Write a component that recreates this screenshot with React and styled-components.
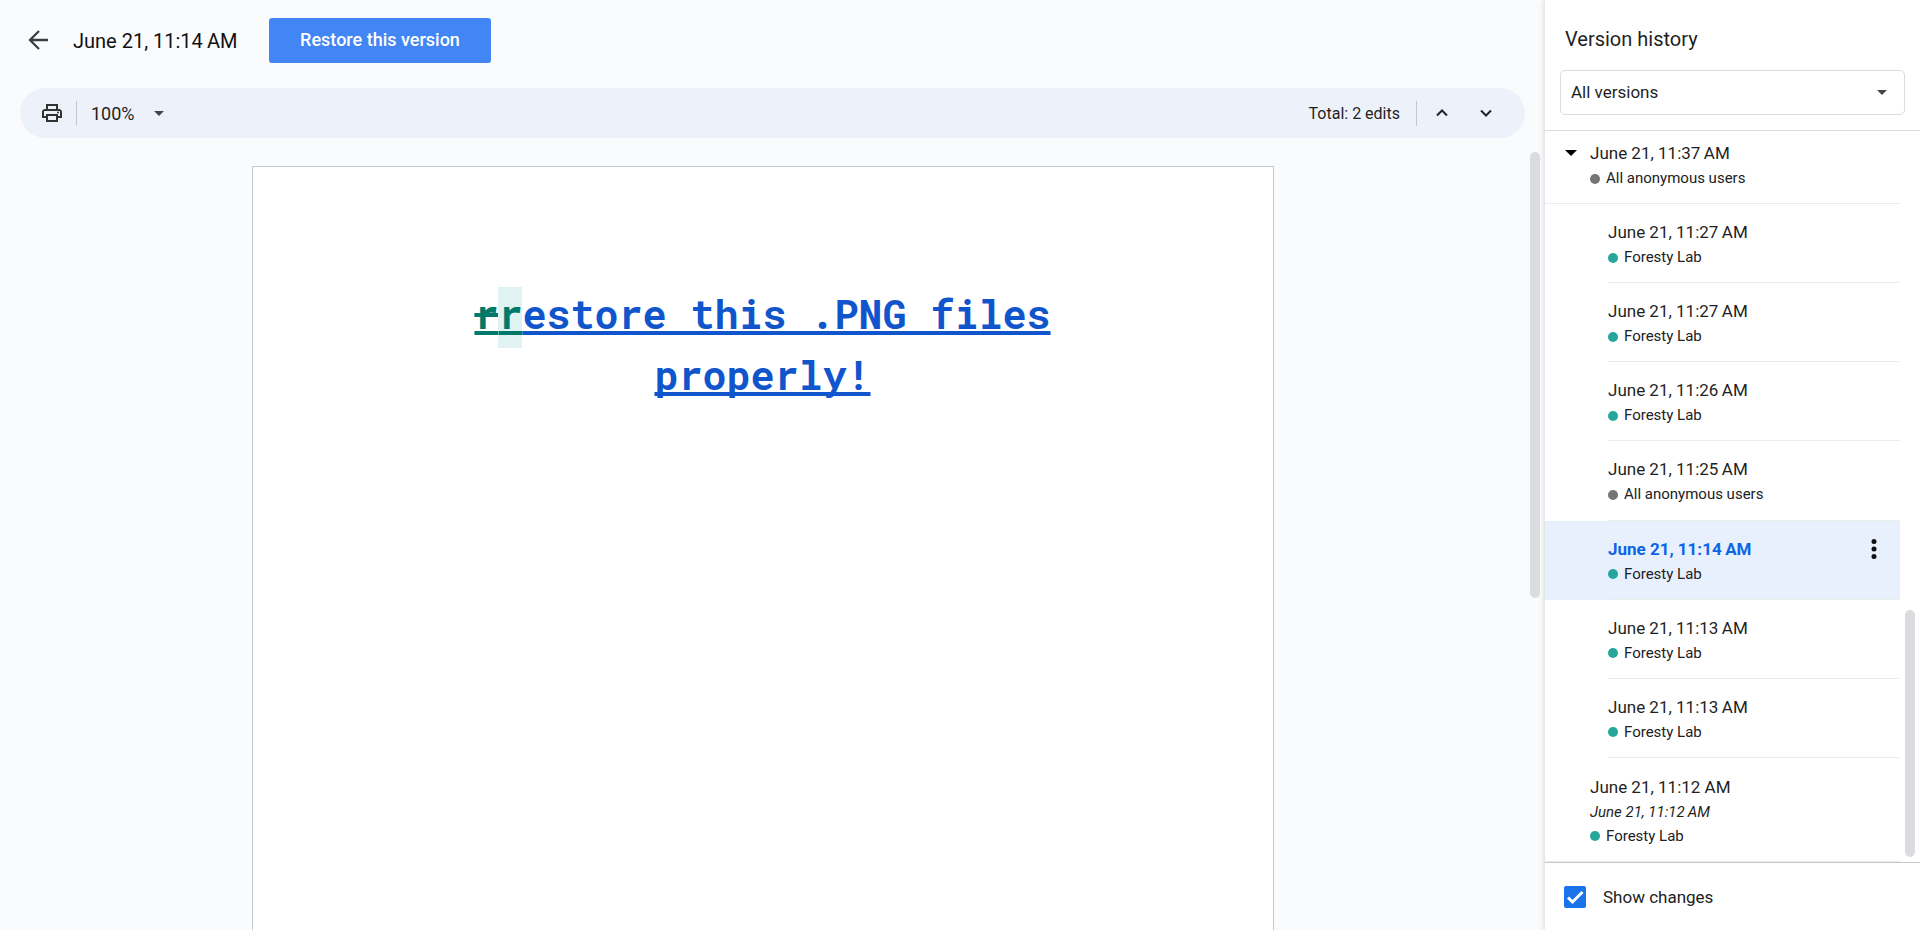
import React, { useState } from "react";
import styled, { createGlobalStyle, css } from "styled-components";

const GlobalStyle = createGlobalStyle`
  *, *::before, *::after { box-sizing: border-box; }
  body {
    margin: 0;
    background: #fafbfd;
    color: #1f1f1f;
    font-family: Roboto, "Liberation Sans", sans-serif;
  }
  button, select, input { font: inherit; color: inherit; margin: 0; }
`;

const Shell = styled.div`
  display: flex;
  min-height: 100vh;
`;

const Main = styled.main`
  flex: 1;
  min-width: 0;
  display: flex;
  flex-direction: column;
`;

const TopBar = styled.header`
  display: flex;
  align-items: center;
  height: 88px;
  padding: 0 20px 8px;
`;

const IconButton = styled.button`
  display: inline-flex;
  align-items: center;
  justify-content: center;
  flex: none;
  width: ${(p) => p.$size || 36}px;
  height: ${(p) => p.$size || 36}px;
  padding: 0;
  border: 0;
  border-radius: 50%;
  background: transparent;
  cursor: pointer;
  svg { display: block; }
`;

const Title = styled.h1`
  margin: 0 0 0 17px;
  padding-top: 2px;
  width: 180px;
  font-size: 20px;
  line-height: 28px;
  font-weight: 400;
  color: #111;
  white-space: nowrap;
`;

const RestoreButton = styled.button`
  height: 45px;
  width: 222px;
  margin-left: 16px;
  padding: 0 0 2px;
  border: 0;
  border-radius: 3px;
  background: #4285f4;
  color: #fff;
  font-size: 18px;
  font-weight: 500;
  cursor: pointer;
`;

const Toolbar = styled.div`
  display: flex;
  align-items: center;
  height: 50px;
  margin: 0 20px;
  padding: 0 21px 0 20px;
  border-radius: 25px;
  background: #edf2fa;
`;

const Divider = styled.span`
  width: 1px;
  height: 25px;
  background: #c4c7c5;
`;

const ToolDivider = styled(Divider)`
  margin-left: 12px;
`;

const SelectWrap = styled.div`
  display: grid;
  align-items: center;
  > * { grid-area: 1 / 1; }
  > svg { justify-self: end; pointer-events: none; }
`;

const ZoomWrap = styled(SelectWrap)`
  width: 73px;
  margin-left: 14px;
`;

const PlainSelect = styled.select`
  appearance: none;
  width: 100%;
  padding: 0;
  border: 0;
  background: transparent;
  font-size: 18px;
  line-height: 24px;
`;

const ZoomSelect = styled(PlainSelect)`
  padding-top: 2px;
`;

const EditCount = styled.span`
  margin-left: auto;
  margin-right: 16px;
  padding-top: 2px;
  font-size: 16px;
  line-height: 24px;
`;

const StepButtons = styled.div`
  display: flex;
  gap: 8px;
  margin-left: 7px;
`;

const Canvas = styled.div`
  flex: 1;
  display: flex;
  padding: 14px 5px 0 0;
`;

const Sheet = styled.article`
  width: 1022px;
  max-width: 100%;
  margin: 14px auto 0;
  padding: 116px 120px 120px;
  border: 1px solid #c7c9cc;
  border-bottom: 0;
  background: #fff;
`;

const Heading = styled.h2`
  margin: 0;
  text-align: center;
  font-family: "Roboto Mono", "DejaVu Sans Mono", "Liberation Mono", monospace;
  font-size: 40px;
  line-height: 61px;
  font-weight: 700;
`;

const decoration = css`
  text-decoration-thickness: 4px;
  text-underline-offset: 2px;
  text-decoration-skip-ink: none;
`;

const DocLink = styled.a`
  color: #1155cc;
  text-decoration-line: underline;
  ${decoration}
`;

const Removed = styled.del`
  display: inline-block;
  color: #00796b;
  text-decoration-line: underline line-through;
  ${decoration}
`;

const Added = styled.ins`
  display: inline-block;
  line-height: 53px;
  padding-bottom: 8px;
  margin-bottom: -4px;
  background: #e0f2f1;
  color: #00796b;
  text-decoration-line: underline;
  ${decoration}
`;

const Thumb = styled.span`
  flex: none;
  width: 10px;
  border-radius: 5px;
  background: #dadce0;
  height: ${(p) => p.$length}px;
  align-self: ${(p) => (p.$atEnd ? "flex-end" : "flex-start")};
  margin: 0 0 ${(p) => (p.$atEnd ? 5 : 0)}px 5px;
`;

const Sidebar = styled.aside`
  flex: none;
  width: 375px;
  display: flex;
  flex-direction: column;
  background: #fff;
  box-shadow: 0 0 6px rgba(60, 64, 67, 0.25);
`;

const SideHeader = styled.div`
  height: 131px;
  padding: 25px 15px 0;
  border-bottom: 1px solid #dadce0;
`;

const SideTitle = styled.h2`
  margin: 0 0 17px 5px;
  font-size: 20px;
  line-height: 28px;
  font-weight: 400;
`;

const FilterWrap = styled(SelectWrap)`
  > svg { margin-right: 18px; }
`;

const FilterSelect = styled(PlainSelect)`
  height: 45px;
  padding: 0 10px 2px;
  border: 1px solid #dadce0;
  border-radius: 5px;
  font-size: 17px;
`;

const ListArea = styled.div`
  flex: 1;
  display: flex;
  padding-right: 5px;
`;

const VersionList = styled.ul`
  flex: 1;
  display: flex;
  flex-direction: column;
  margin: 0;
  padding: 0;
  list-style: none;
`;

const rowKinds = {
  group: css`
    flex: 0 0 73px;
    padding: 9px 0 0 8px;
    background-position: 0 100%;
  `,
  child: css`
    flex: 1 0 79px;
    padding: 15px 0 0 63px;
    background-position: 63px 100%;
  `,
  last: css`
    flex: 0 0 104px;
    padding: 16px 0 0 45px;
    background-position: 0 100%;
  `,
};

const Row = styled.li`
  display: flex;
  align-items: flex-start;
  background-image: linear-gradient(#ebebeb, #ebebeb);
  background-size: 100% 1px;
  background-repeat: no-repeat;
  background-color: ${(p) => (p.$selected ? "#e8f0fe" : "transparent")};
  ${(p) => rowKinds[p.$kind]}
`;

const VersionButton = styled.button`
  flex: 1;
  padding: 0;
  border: 0;
  background: transparent;
  text-align: left;
  cursor: pointer;
`;

const When = styled.span`
  display: block;
  font-size: 17px;
  line-height: 26px;
  font-weight: ${(p) => (p.$selected ? 700 : 400)};
  color: ${(p) => (p.$selected ? "#0b65e5" : "#1f1f1f")};
`;

const Original = styled.em`
  display: block;
  font-size: 15px;
  line-height: 24px;
`;

const Author = styled.span`
  display: flex;
  align-items: center;
  gap: 6px;
  font-size: 15px;
  line-height: 25px;
  color: #202124;
  &::before {
    content: "";
    width: 10px;
    height: 10px;
    border-radius: 50%;
    background: ${(p) => p.$color};
  }
`;

const SideFooter = styled.div`
  height: 68px;
  padding-left: 19px;
  border-top: 1px solid #c7c9cc;
  display: flex;
  align-items: center;
`;

const CheckLabel = styled.label`
  display: flex;
  align-items: center;
  gap: 17px;
  font-size: 17px;
  line-height: 24px;
  color: #202124;
  cursor: pointer;
`;

const CheckBox = styled.span`
  display: grid;
  > * { grid-area: 1 / 1; }
  > svg { pointer-events: none; }
  > input {
    appearance: none;
    width: 22px;
    height: 22px;
    border: 2px solid #1a73e8;
    border-radius: 2px;
  }
  > input:checked { background: #1a73e8; }
`;

const BackIcon = () => (
  <svg width="24" height="24" viewBox="0 0 24 24" fill="none" stroke="#3c3f42" strokeWidth="2.300">
    <path d="M22 12H4M13 3l-9 9 9 9" />
  </svg>
);

const PrintIcon = () => (
  <svg width="24" height="24" viewBox="0 0 24 24" fill="#303330">
    <path d="M19 8h-1V3H6v5H5c-1.660 0-3 1.340-3 3v6h4v4h12v-4h4v-6c0-1.660-1.340-3-3-3zM8 5h8v3H8V5zm8 12v2H8v-4h8v2zm2-2v-2H6v2H4v-4c0-.550.450-1 1-1h14c.550 0 1 .450 1 1v4h-2z" />
    <circle cx="18" cy="11.500" r="1" />
  </svg>
);

const Caret = ({ width = 10, color = "#444746" }) => (
  <svg width={width} height={width / 2} viewBox="0 0 10 5" fill={color}>
    <path d="M0 0h10L5 5z" />
  </svg>
);

const Chevron = ({ up }) => (
  <svg width="12" height="8" viewBox="0 0 12 8" fill="none" stroke="#222" strokeWidth="2">
    <path d={up ? "M1 6.500l5-5 5 5" : "M1 1.500l5 5 5-5"} />
  </svg>
);

const Kebab = () => (
  <svg width="6" height="20" viewBox="0 0 6 20" fill="#111">
    <circle cx="3" cy="2.500" r="2.500" />
    <circle cx="3" cy="10" r="2.500" />
    <circle cx="3" cy="17.500" r="2.500" />
  </svg>
);

const GroupToggle = styled(IconButton)`
  height: 26px;
  margin-right: 1px;
`;

const RowMenu = styled(IconButton)`
  height: 26px;
  margin-right: 8px;
`;

const TEAL = "#26a69a";
const GREY = "#757575";

const versions = [
  { id: 1, kind: "group", when: "June 21, 11:37\u2009AM", author: "All anonymous users", color: GREY },
  { id: 2, kind: "child", when: "June 21, 11:27\u2009AM", author: "Foresty Lab", color: TEAL },
  { id: 3, kind: "child", when: "June 21, 11:27\u2009AM", author: "Foresty Lab", color: TEAL },
  { id: 4, kind: "child", when: "June 21, 11:26\u2009AM", author: "Foresty Lab", color: TEAL },
  { id: 5, kind: "child", when: "June 21, 11:25\u2009AM", author: "All anonymous users", color: GREY },
  { id: 6, kind: "child", when: "June 21, 11:14\u2009AM", author: "Foresty Lab", color: TEAL },
  { id: 7, kind: "child", when: "June 21, 11:13\u2009AM", author: "Foresty Lab", color: TEAL },
  { id: 8, kind: "child", when: "June 21, 11:13\u2009AM", author: "Foresty Lab", color: TEAL },
  { id: 9, kind: "last", when: "June 21, 11:12 AM", original: "June 21, 11:12\u2009AM", author: "Foresty Lab", color: TEAL },
];

export default function App() {
  const [selected, setSelected] = useState(6);
  const [showChanges, setShowChanges] = useState(true);

  return (
    <>
      <GlobalStyle />
      <Shell>
        <Main>
          <TopBar>
            <IconButton aria-label="Back"><BackIcon /></IconButton>
            <Title>{"June 21, 11:14\u2009AM"}</Title>
            <RestoreButton>Restore this version</RestoreButton>
          </TopBar>
          <Toolbar>
            <IconButton $size={24} aria-label="Print"><PrintIcon /></IconButton>
            <ToolDivider />
            <ZoomWrap>
              <ZoomSelect aria-label="Zoom" defaultValue="100%">
                <option>100%</option>
              </ZoomSelect>
              <Caret />
            </ZoomWrap>
            <EditCount>Total: 2 edits</EditCount>
            <Divider />
            <StepButtons>
              <IconButton aria-label="Previous edit"><Chevron up /></IconButton>
              <IconButton aria-label="Next edit"><Chevron /></IconButton>
            </StepButtons>
          </Toolbar>
          <Canvas>
            <Sheet>
              <Heading>
                <DocLink href="#">
                  {showChanges && <Removed>r</Removed>}
                  <Added>r</Added>estore this .PNG files properly!
                </DocLink>
              </Heading>
            </Sheet>
            <Thumb $length={446} />
          </Canvas>
        </Main>

        <Sidebar>
          <SideHeader>
            <SideTitle>Version history</SideTitle>
            <FilterWrap>
              <FilterSelect aria-label="Filter versions" defaultValue="All versions">
                <option>All versions</option>
              </FilterSelect>
              <Caret />
            </FilterWrap>
          </SideHeader>
          <ListArea>
            <VersionList>
              {versions.map((v) => {
                const isSelected = v.id === selected;
                return (
                  <Row key={v.id} $kind={v.kind} $selected={isSelected}>
                    {v.kind === "group" && (
                      <GroupToggle aria-label="Collapse versions">
                        <Caret width={12} color="#000" />
                      </GroupToggle>
                    )}
                    <VersionButton onClick={() => setSelected(v.id)}>
                      <When $selected={isSelected}>{v.when}</When>
                      {v.original && <Original>{v.original}</Original>}
                      <Author $color={v.color}>{v.author}</Author>
                    </VersionButton>
                    {isSelected && (
                      <RowMenu aria-label="More actions"><Kebab /></RowMenu>
                    )}
                  </Row>
                );
              })}
            </VersionList>
            <Thumb $length={247} $atEnd />
          </ListArea>
          <SideFooter>
            <CheckLabel>
              <CheckBox>
                <input
                  type="checkbox"
                  checked={showChanges}
                  onChange={(e) => setShowChanges(e.target.checked)}
                />
                <svg width="22" height="22" viewBox="0 0 22 22" fill="none" stroke="#fff" strokeWidth="3">
                  <path d="M4 11.500l4.500 4.500L18.500 6" />
                </svg>
              </CheckBox>
              Show changes
            </CheckLabel>
          </SideFooter>
        </Sidebar>
      </Shell>
    </>
  );
}
